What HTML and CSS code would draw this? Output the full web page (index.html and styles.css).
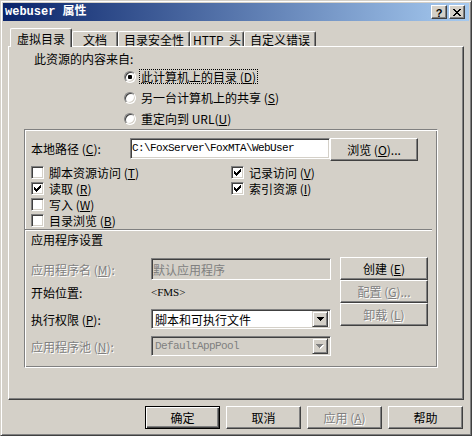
FILE: index.html
```html
<!DOCTYPE html>
<html lang="zh-CN">
<head>
<meta charset="utf-8">
<title>webuser 属性</title>
<link rel="stylesheet" href="styles.css">
</head>
<body>
<div class="window">
  <div class="titlebar">
    <span class="title">webuser 属性</span>
    <div class="tb-buttons">
      <span class="tb-btn tb-help">?</span>
      <span class="tb-btn">
        <svg width="8" height="7" viewBox="0 0 8 7"><path d="M0 0h2v1h-2z M6 0h2v1h-2z M1 1h2v1h-2z M5 1h2v1h-2z M2 2h4v1h-4z M3 3h2v1h-2z M2 4h4v1h-4z M1 5h2v1h-2z M5 5h2v1h-2z M0 6h2v1h-2z M6 6h2v1h-2z" fill="#000"/></svg>
      </span>
    </div>
  </div>

  <div class="tabs">
    <div class="tab active tab-vdir">虚拟目录</div>
    <div class="tab tab-docs">文档</div>
    <div class="tab tab-sec">目录安全性</div>
    <div class="tab tab-http">HTTP&nbsp; 头</div>
    <div class="tab tab-err">自定义错误</div>
  </div>

  <div class="panel">
    <div class="src-label">此资源的内容来自:</div>
    <div class="radios">
      <div class="radio-row"><span class="rb checked"></span><span class="rlabel focus">此计算机上的目录 (<u>D</u>)</span></div>
      <div class="radio-row"><span class="rb"></span><span class="rlabel">另一台计算机上的共享 (<u>S</u>)</span></div>
      <div class="radio-row"><span class="rb"></span><span class="rlabel">重定向到 URL(<u>U</u>)</span></div>
    </div>

    <div class="group">
      <div class="path-row">
        <span class="path-label">本地路径 (<u>C</u>):</span>
        <div class="textbox path-box"><span class="mono">C:\FoxServer\FoxMTA\WebUser</span></div>
        <button class="btn browse-btn">浏览 (<u>O</u>)...</button>
      </div>

      <div class="checks">
        <div class="check-item"><span class="cb"></span><span>脚本资源访问 (<u>T</u>)</span></div>
        <div class="check-item"><span class="cb checked"><svg width="7" height="7" viewBox="0 0 7 7"><path d="M6 0h1v1h-1z M5 1h2v1h-2z M0 2h1v1h-1z M4 2h3v1h-3z M0 3h2v1h-2z M3 3h3v1h-3z M0 4h5v1h-5z M1 5h3v1h-3z M2 6h1v1h-1z" fill="#000"/></svg></span><span>记录访问 (<u>V</u>)</span></div>
        <div class="check-item"><span class="cb checked"><svg width="7" height="7" viewBox="0 0 7 7"><path d="M6 0h1v1h-1z M5 1h2v1h-2z M0 2h1v1h-1z M4 2h3v1h-3z M0 3h2v1h-2z M3 3h3v1h-3z M0 4h5v1h-5z M1 5h3v1h-3z M2 6h1v1h-1z" fill="#000"/></svg></span><span>读取 (<u>R</u>)</span></div>
        <div class="check-item"><span class="cb checked"><svg width="7" height="7" viewBox="0 0 7 7"><path d="M6 0h1v1h-1z M5 1h2v1h-2z M0 2h1v1h-1z M4 2h3v1h-3z M0 3h2v1h-2z M3 3h3v1h-3z M0 4h5v1h-5z M1 5h3v1h-3z M2 6h1v1h-1z" fill="#000"/></svg></span><span>索引资源 (<u>I</u>)</span></div>
        <div class="check-item"><span class="cb"></span><span>写入 (<u>W</u>)</span></div>
        <div class="check-item"></div>
        <div class="check-item"><span class="cb"></span><span>目录浏览 (<u>B</u>)</span></div>
        <div class="check-item"></div>
      </div>

      <div class="sep"></div>
      <div class="app-title">应用程序设置</div>

      <div class="app">
        <div class="app-fields">
          <div class="field-row row-name">
            <span class="field-label disabled">应用程序名 (<u>M</u>):</span>
            <div class="textbox disabled-box field"><span class="grey">默认应用程序</span></div>
          </div>
          <div class="field-row row-start">
            <span class="field-label">开始位置:</span>
            <span class="start-val">&lt;FMS&gt;</span>
          </div>
          <div class="field-row row-perm">
            <span class="field-label">执行权限 (<u>P</u>):</span>
            <div class="combo field">
              <span class="combo-text">脚本和可执行文件</span>
              <span class="drop"><svg width="7" height="4" viewBox="0 0 7 4"><path d="M0 0H7V1H6V2H5V3H4V4H3V3H2V2H1V1H0Z" fill="#000"/></svg></span>
            </div>
          </div>
          <div class="field-row row-pool">
            <span class="field-label disabled">应用程序池 (<u>N</u>):</span>
            <div class="combo combo-disabled field">
              <span class="combo-text mono grey">DefaultAppPool</span>
              <span class="drop"><svg width="8" height="5" viewBox="0 0 8 5"><path d="M1 1H8V2H7V3H6V4H5V5H4V4H3V3H2V2H1Z" fill="#fff"/><path d="M0 0H7V1H6V2H5V3H4V4H3V3H2V2H1V1H0Z" fill="#808080"/></svg></span>
            </div>
          </div>
        </div>
        <div class="app-buttons">
          <button class="btn app-btn">创建 (<u>E</u>)</button>
          <button class="btn app-btn btn-disabled btn-config">配置 (<u>G</u>)...</button>
          <button class="btn app-btn btn-disabled btn-unload">卸载 (<u>L</u>)</button>
        </div>
      </div>
    </div>
  </div>

  <div class="footer">
    <button class="btn foot-btn default">确定</button>
    <button class="btn foot-btn">取消</button>
    <button class="btn foot-btn btn-disabled">应用 (<u>A</u>)</button>
    <button class="btn foot-btn">帮助</button>
  </div>
</div>
</body>
</html>
```

FILE: styles.css
```css
* { box-sizing: border-box; }
html, body { margin: 0; padding: 0; }
body {
  width: 472px;
  height: 436px;
  overflow: hidden;
  background: #d4d0c8;
  font-family: "Noto Sans CJK SC", "Liberation Sans", sans-serif;
  font-size: 12px;
  line-height: 13px;
  color: #000;
}
u { text-underline-offset: 1px; }

.window {
  width: 472px;
  height: 436px;
  background: #d4d0c8;
  border: 1px solid;
  border-color: #d4d0c8 #404040 #404040 #d4d0c8;
  box-shadow: inset 1px 1px #fff, inset -1px -1px #808080;
  padding: 2px;
  display: flex;
  flex-direction: column;
}

/* title bar */
.titlebar {
  height: 18px;
  flex: none;
  background: linear-gradient(to right, #0a246a, #a6caf0);
  display: flex;
  align-items: center;
  padding: 0 4px 0 2px;
  color: #fff;
}
.title {
  flex: 1;
  font-family: "Liberation Mono", "Noto Sans CJK SC", monospace;
  font-weight: bold;
  font-size: 12px;
  line-height: 14px;
}
.tb-buttons { display: flex; gap: 2px; }
.tb-btn {
  width: 16px;
  height: 14px;
  background: #d4d0c8;
  border: 1px solid;
  border-color: #fff #404040 #404040 #fff;
  box-shadow: inset -1px -1px #808080;
  display: flex;
  align-items: center;
  justify-content: center;
  color: #000;
}
.tb-help {
  font-family: "Liberation Sans", sans-serif;
  font-weight: bold;
  font-size: 11px;
  line-height: 12px;
  padding-top: 1px;
}

/* tabs */
.tabs {
  flex: none;
  display: flex;
  align-items: flex-end;
  height: 18px;
  margin: 7px 5px 0;
  padding-left: 2px;
  position: relative;
  z-index: 1;
}
.tab {
  height: 15px;
  background: #d4d0c8;
  border-top: 1px solid #fff;
  border-left: 1px solid #fff;
  border-right: 1px solid #404040;
  box-shadow: inset -1px 0 #808080;
  border-radius: 2px 2px 0 0;
  display: flex;
  align-items: center;
  justify-content: center;
  white-space: nowrap;
}
.tab.active { height: 19px; margin-bottom: -1px; }
.tab-vdir { width: 62px; }
.tab-docs { width: 46px; }
.tab-sec { width: 72px; }
.tab-http { width: 54px; }
.tab-err { width: 72px; }

/* panel */
.panel {
  flex: none;
  margin: 0 5px;
  height: 354px;
  border: 1px solid;
  border-color: #fff #404040 #404040 #fff;
  box-shadow: inset -1px -1px #808080;
  padding-top: 5px;
}
.src-label { margin-left: 25px; height: 13px; }
.radios { margin: 1px 0 0 115px; }
.radio-row { height: 21px; display: flex; align-items: center; }
.rb {
  width: 12px;
  height: 12px;
  border-radius: 50%;
  border: 1px solid;
  border-color: #808080 #fff #fff #808080;
  box-shadow: inset 1px 1px #404040, inset -1px -1px #d4d0c8;
  background: #fff;
  margin-right: 3px;
  display: flex;
  align-items: center;
  justify-content: center;
  flex: none;
}
.rb.checked::after {
  content: "";
  width: 4px;
  height: 4px;
  border-radius: 1px;
  background: #000;
}
.rlabel { border: 1px solid transparent; padding: 0 1px; white-space: nowrap; }
.rlabel.focus { border: 1px dotted #000; }

/* group */
.group {
  margin-left: 15px;
  width: 414px;
  height: 239px;
  border: 1px solid;
  border-color: #808080 #fff #fff #808080;
  box-shadow: inset 1px 1px #fff, inset -1px -1px #808080;
  padding: 8px 0 0 6px;
}
.path-row { display: flex; align-items: flex-start; height: 23px; }
.path-label { width: 99px; line-height: 21px; white-space: nowrap; }
.textbox {
  height: 21px;
  background: #fff;
  border: 1px solid;
  border-color: #808080 #fff #fff #808080;
  box-shadow: inset 1px 1px #404040, inset -1px -1px #d4d0c8;
  padding: 0 1px;
  display: flex;
  align-items: center;
  white-space: nowrap;
}
.path-box { width: 200px; }
.mono {
  font-family: "Liberation Mono", monospace;
  font-size: 11px;
  letter-spacing: -0.6px;
}
.browse-btn { margin-left: 10px; width: 88px; height: 23px; }

.checks {
  margin-top: 3px;
  display: grid;
  grid-template-columns: 200px 200px;
  grid-auto-rows: 16px;
}
.check-item { display: flex; align-items: center; white-space: nowrap; }
.cb {
  width: 13px;
  height: 13px;
  flex: none;
  background: #fff;
  border: 1px solid;
  border-color: #808080 #fff #fff #808080;
  box-shadow: inset 1px 1px #404040, inset -1px -1px #d4d0c8;
  margin-right: 5px;
  display: flex;
  align-items: center;
  justify-content: center;
}
.cb svg { display: block; }

.sep {
  margin: 1px 0 0 -6px;
  width: 407px;
  height: 2px;
  border-top: 1px solid #808080;
  border-bottom: 1px solid #fff;
}
.app-title { margin-top: 2px; height: 13px; }

.app { margin-top: 11px; display: flex; }
.app-fields { width: 309px; padding-top: 1px; }
.field-row { display: flex; align-items: center; }
.field-label { width: 120px; white-space: nowrap; }
.field { width: 180px; }
.row-name { height: 22px; }
.row-name .textbox { height: 22px; }
.row-start { height: 24px; }
.start-val { font-family: "Liberation Serif", serif; font-size: 11px; }
.row-perm { margin-top: 5px; height: 20px; }
.row-pool { margin-top: 7px; height: 20px; }
.disabled { color: #808080; text-shadow: 1px 1px #fff; }
.disabled-box { background: #d4d0c8; }
.grey { color: #808080; }

.combo {
  height: 20px;
  background: #fff;
  border: 1px solid;
  border-color: #808080 #fff #fff #808080;
  box-shadow: inset 1px 1px #404040, inset -1px -1px #d4d0c8;
  padding: 2px 2px 2px 3px;
  display: flex;
  align-items: center;
}
.combo-disabled { background: #d4d0c8; }
.combo-text { flex: 1; white-space: nowrap; }
.drop {
  width: 16px;
  height: 16px;
  flex: none;
  background: #d4d0c8;
  border: 1px solid;
  border-color: #d4d0c8 #404040 #404040 #d4d0c8;
  box-shadow: inset 1px 1px #fff, inset -1px -1px #808080;
  display: flex;
  align-items: center;
  justify-content: center;
}
.drop svg { display: block; }

.app-buttons { display: flex; flex-direction: column; }
.app-btn { width: 88px; height: 23px; }
.btn-config { margin-top: 13px; }
.btn-unload { margin-top: 17px; }

/* buttons */
.btn {
  appearance: none;
  margin: 0;
  padding: 0;
  font: inherit;
  color: #000;
  background: #d4d0c8;
  border: 1px solid;
  border-color: #fff #404040 #404040 #fff;
  box-shadow: inset -1px -1px #808080;
  display: flex;
  align-items: center;
  justify-content: center;
  white-space: nowrap;
}
.btn-disabled { color: #808080; text-shadow: 1px 1px #fff; }
.btn.default {
  border: 1px solid #000;
  box-shadow: inset 1px 1px #fff, inset -1px -1px #404040, inset -2px -2px #808080;
}

.footer {
  flex: none;
  display: flex;
  justify-content: flex-end;
  gap: 6px;
  margin-top: 6px;
  padding-right: 6px;
}
.foot-btn { width: 75px; height: 23px; }
```
